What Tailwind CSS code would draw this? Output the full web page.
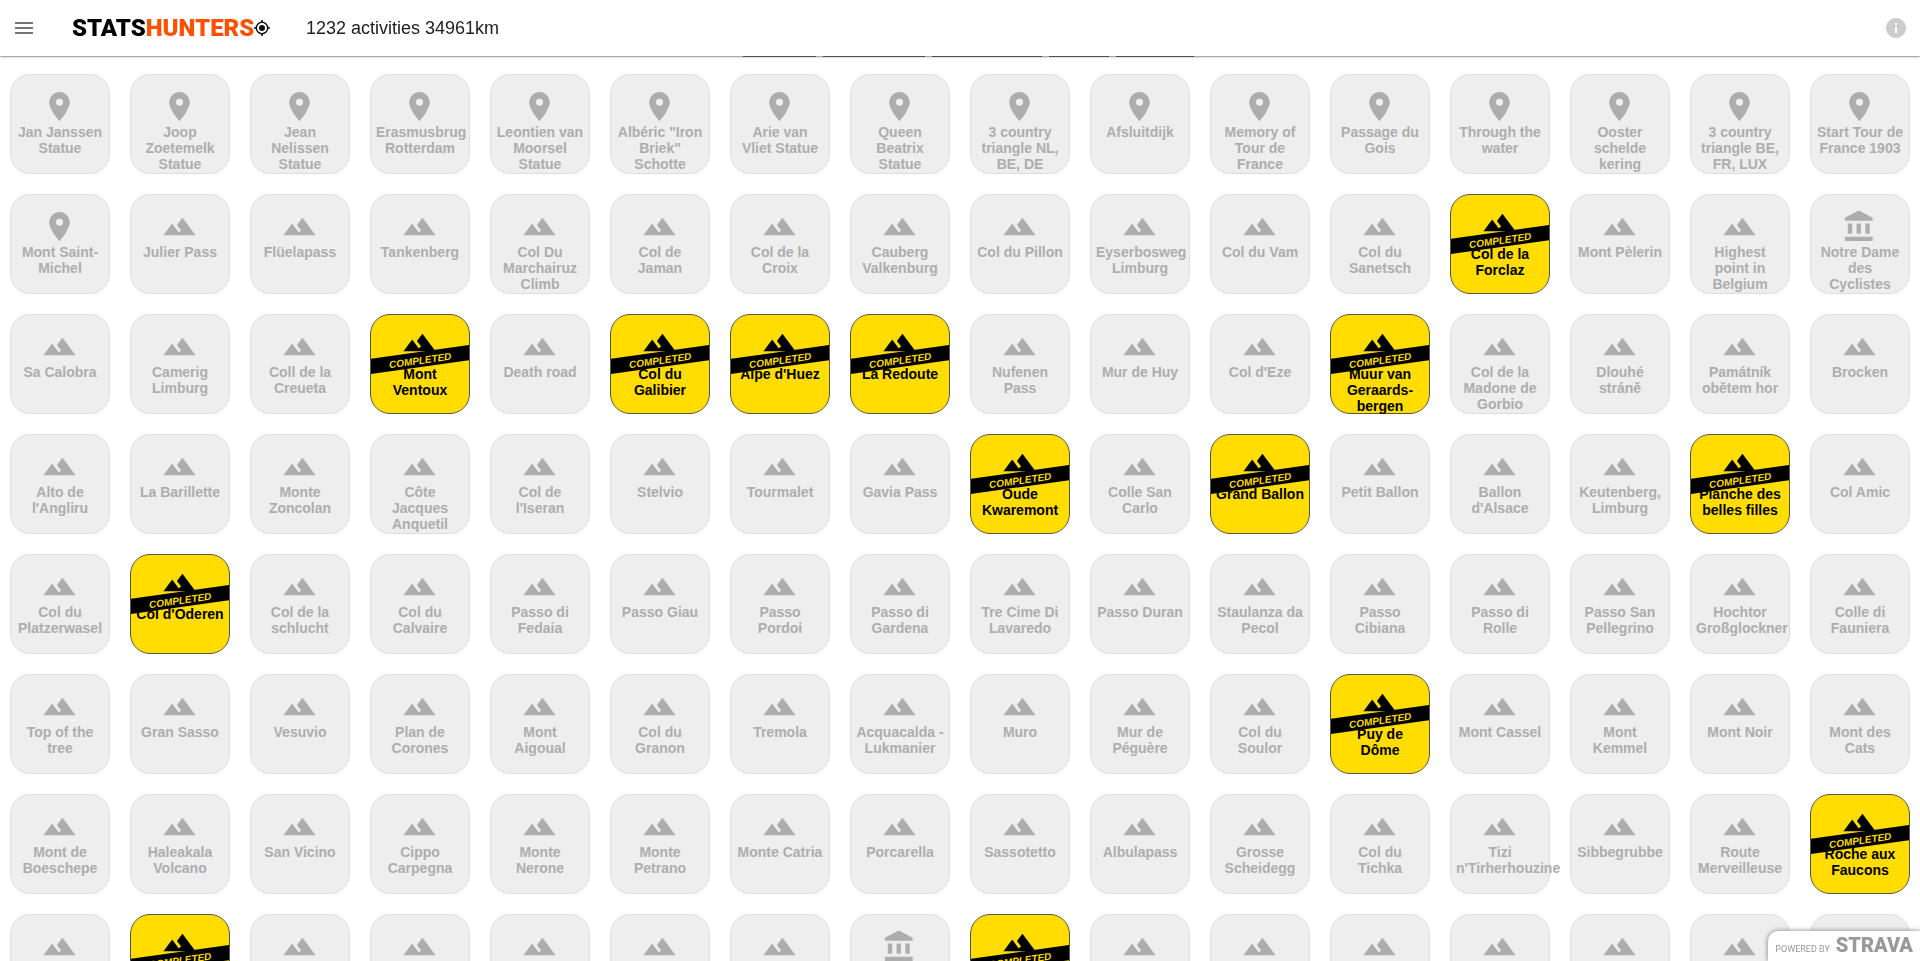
<!DOCTYPE html>
<html lang="en">
<head>
<meta charset="utf-8">
<title>StatsHunters</title>
<script src="https://cdn.jsdelivr.net/npm/@tailwindcss/browser@4"></script>
</head>
<body class="h-screen overflow-hidden bg-white font-['Liberation_Sans',Arial,sans-serif]">
<svg class="hidden" aria-hidden="true">
  <symbol id="hill" viewBox="0 0 24 24"><path d="M14 6l-3.75 5 2.85 3.8-1.6 1.2C9.81 13.75 7 10 7 10l-6 8h22L14 6z"/></symbol>
  <symbol id="pin" viewBox="0 0 24 24"><path d="M12 2C8.13 2 5 5.13 5 9c0 5.25 7 13 7 13s7-7.75 7-13c0-3.87-3.13-7-7-7zm0 9.5c-1.38 0-2.5-1.12-2.5-2.5s1.12-2.5 2.5-2.5 2.5 1.12 2.5 2.5-1.12 2.5-2.5 2.5z"/></symbol>
  <symbol id="bank" viewBox="0 0 24 24"><path d="M4 10v7h3v-7H4zm6 0v7h3v-7h-3zM2 22h19v-3H2v3zm14-12v7h3v-7h-3zm-4.5-9L2 6v2h19V6l-9.5-5z"/></symbol>
</svg>

<header class="fixed inset-x-0 top-0 z-10 flex h-14 items-center bg-white px-3 shadow-[0_1px_3px_rgba(0,0,0,0.2),0_1px_1px_rgba(0,0,0,0.14),0_2px_1px_-1px_rgba(0,0,0,0.12)]">
  <button type="button" aria-label="Menu" class="size-6">
    <svg viewBox="0 0 24 24" class="size-6 fill-[#757575]"><path d="M3 18h18v-2H3v2zm0-5h18v-2H3v2zm0-7v2h18V6H3z"/></svg>
  </button>
  <a href="#" class="ml-9 flex w-[234px] items-center font-['Roboto',sans-serif] text-2xl leading-6 font-black text-black">
    <span>STATS<span class="text-[#ff4f00]">HUNTERS</span></span>
    <svg viewBox="0 0 16 16" class="size-4" aria-hidden="true"><circle cx="8" cy="8" r="5.7" fill="none" stroke="#111" stroke-width="1.5"/><circle cx="8" cy="8" r="3" fill="#111"/><path d="M8 0v3M8 13v3M0 8h3M13 8h3" stroke="#111" stroke-width="1.6"/></svg>
  </a>
  <h1 class="text-lg text-[#212121]">1232 activities 34961km</h1>
  <button type="button" aria-label="Info" class="ml-auto size-6">
    <svg viewBox="0 0 24 24" class="size-6 fill-[#cccccc]"><path d="M12 2C6.48 2 2 6.48 2 12s4.480 10 10 10 10-4.480 10-10S17.520 2 12 2zm1 15h-2v-6h2v6zm0-8h-2V7h2v2z"/></svg>
  </button>
</header>

<main class="pt-14">
  <div class="mb-[17px] flex h-px justify-center gap-[7px] pl-4" aria-hidden="true">
    <span class="w-[73px] bg-[#777777]"></span>
    <span class="w-[102px] bg-[#777777]"></span>
    <span class="w-[110px] bg-[#777777]"></span>
    <span class="w-[60px] bg-[#777777]"></span>
    <span class="w-[78px] bg-[#777777]"></span>
  </div>
  <ul id="badges" class="flex flex-wrap gap-5 px-[10px]"></ul>
</main>

<footer class="fixed right-0 bottom-0 z-10 flex h-[30px] items-baseline gap-[6px] rounded-tl-[10px] bg-white pr-[7px] pl-[7px] text-[#999999] shadow-[0_0_5px_rgba(0,0,0,0.5)]">
  <span class="font-['Roboto',sans-serif] text-[9px]">POWERED BY</span>
  <span class="font-['Roboto',sans-serif] text-xl leading-7 font-black">STRAVA</span>
</footer>

<script>
// Prefixes: "@" pin, "#" monument, "*" completed; everything else is a climb.
const rows = [
  '@Jan Janssen Statue|@Joop Zoetemelk Statue|@Jean Nelissen Statue|@Erasmusbrug Rotterdam|@Leontien van Moorsel Statue|@Albéric "Iron Briek" Schotte|@Arie van Vliet Statue|@Queen Beatrix Statue|@3 country triangle NL, BE, DE|@Afsluitdijk|@Memory of Tour de France|@Passage du Gois|@Through the water|@Ooster schelde kering|@3 country triangle BE, FR, LUX|@Start Tour de France 1903',
  "@Mont Saint-Michel|Julier Pass|Flüelapass|Tankenberg|Col Du Marchairuz Climb|Col de Jaman|Col de la Croix|Cauberg Valkenburg|Col du Pillon|Eyserbosweg Limburg|Col du Vam|Col du Sanetsch|*Col de la Forclaz|Mont Pèlerin|Highest point in Belgium|#Notre Dame des Cyclistes",
  "Sa Calobra|Camerig Limburg|Coll de la Creueta|*Mont Ventoux|Death road|*Col du Galibier|*Alpe d'Huez|*La Redoute|Nufenen Pass|Mur de Huy|Col d'Eze|*Muur van Geraards-bergen|Col de la Madone de Gorbio|Dlouhé stráně|Památník obětem hor|Brocken",
  "Alto de l'Angliru|La Barillette|Monte Zoncolan|Côte Jacques Anquetil|Col de l'Iseran|Stelvio|Tourmalet|Gavia Pass|*Oude Kwaremont|Colle San Carlo|*Grand Ballon|Petit Ballon|Ballon d'Alsace|Keutenberg, Limburg|*Planche des belles filles|Col Amic",
  "Col du Platzerwasel|*Col d'Oderen|Col de la schlucht|Col du Calvaire|Passo di Fedaia|Passo Giau|Passo Pordoi|Passo di Gardena|Tre Cime Di Lavaredo|Passo Duran|Staulanza da Pecol|Passo Cibiana|Passo di Rolle|Passo San Pellegrino|Hochtor Großglockner|Colle di Fauniera",
  "Top of the tree|Gran Sasso|Vesuvio|Plan de Corones|Mont Aigoual|Col du Granon|Tremola|Acquacalda - Lukmanier|Muro|Mur de Péguère|Col du Soulor|*Puy de Dôme|Mont Cassel|Mont Kemmel|Mont Noir|Mont des Cats",
  "Mont de Boeschepe|Haleakala Volcano|San Vicino|Cippo Carpegna|Monte Nerone|Monte Petrano|Monte Catria|Porcarella|Sassotetto|Albulapass|Grosse Scheidegg|Col du Tichka|Tizi n'Tirherhouzine|Sibbegrubbe|Route Merveilleuse|*Roche aux Faucons",
  "|*||||||#|*|||||||"
];
const icons = { '@': 'pin', '#': 'bank' };
document.getElementById('badges').innerHTML = rows.flatMap(r => r.split('|')).map(item => {
  const mark = item && '@#*'.includes(item[0]) ? item[0] : '';
  const name = item.slice(mark.length);
  const icon = `<svg class="ml-[26px] size-[35px] fill-current" aria-hidden="true"><use href="#${icons[mark] || 'hill'}"/></svg>`;
  if (mark === '*') {
    return `<li class="relative size-[100px] rounded-[20px] border border-[#555555] bg-[#ffdd00] px-[5px] pt-[10px] text-center text-sm leading-4 font-bold text-black">${icon}
      <div class="absolute inset-0 overflow-hidden rounded-[19px]"><div class="absolute -inset-x-2 top-[37px] h-[15px] -rotate-8 bg-black text-[10px] leading-[17px] text-[#ffdd00] italic">COMPLETED</div></div>
      <p class="mt-[6px]">${name}</p></li>`;
  }
  return `<li class="size-[100px] rounded-[20px] border border-[#dddddd] bg-[#eeeeee] px-[5px] pt-[14px] text-center text-sm leading-4 font-bold text-[#adadad]">${icon}<p>${name}</p></li>`;
}).join('');
</script>
</body>
</html>
